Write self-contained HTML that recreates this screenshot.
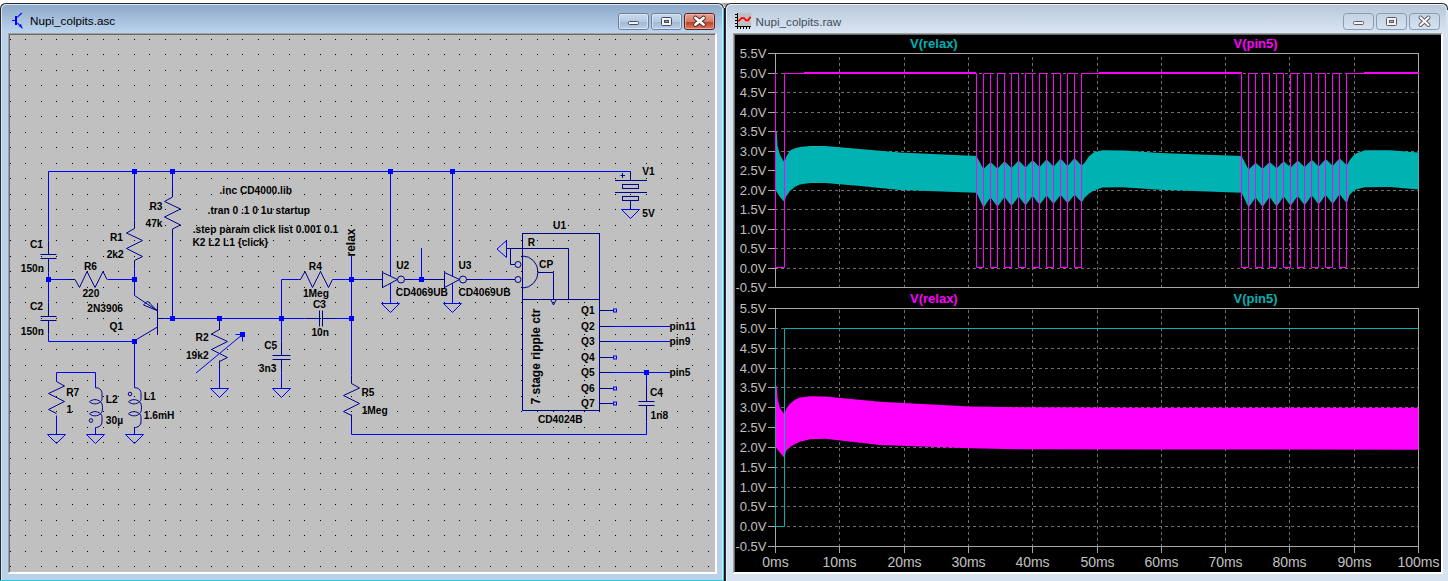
<!DOCTYPE html><html><head><meta charset="utf-8"><style>
html,body{margin:0;padding:0;width:1448px;height:581px;overflow:hidden;background:#fff}
svg{display:block}text{font-family:"Liberation Sans",sans-serif}
</style></head><body>
<svg width="1448" height="581" viewBox="0 0 1448 581">
<rect x="0" y="0" width="1448" height="581" fill="#ffffff"/>
<defs><linearGradient id="tgL" x1="0" y1="0" x2="0" y2="1"><stop offset="0" stop-color="#8fa9c9"/><stop offset="1" stop-color="#bcd4ee"/></linearGradient><linearGradient id="tgR" x1="0" y1="0" x2="0" y2="1"><stop offset="0" stop-color="#b9c9da"/><stop offset="1" stop-color="#d9e5f2"/></linearGradient><linearGradient id="btnL" x1="0" y1="0" x2="0" y2="1"><stop offset="0" stop-color="#c9daee"/><stop offset="0.5" stop-color="#b5cbe3"/><stop offset="0.51" stop-color="#9db6d4"/><stop offset="1" stop-color="#bcd1ea"/></linearGradient><linearGradient id="btnC" x1="0" y1="0" x2="0" y2="1"><stop offset="0" stop-color="#e8a493"/><stop offset="0.5" stop-color="#d47a66"/><stop offset="0.51" stop-color="#b83e22"/><stop offset="1" stop-color="#d9806a"/></linearGradient><linearGradient id="btnR" x1="0" y1="0" x2="0" y2="1"><stop offset="0" stop-color="#c4d3e3"/><stop offset="1" stop-color="#d6e2ef"/></linearGradient></defs>
<path d="M0,581 V9 Q0,3 6,3 H718 Q724,3 724,9 V581 Z" fill="#2a2a2a"/>
<path d="M1,581 V9.5 Q1,4 6.5,4 H717.5 Q723,4 723,9.5 V580 H1 Z" fill="#dbe7f4"/>
<path d="M2,580 V10 Q2,5 7,5 H717 Q722,5 722,10 V580 Z" fill="#b9d1ea"/>
<path d="M2,33 V10 Q2,5 7,5 H717 Q722,5 722,10 V33 Z" fill="url(#tgL)"/>
<rect x="723" y="8" width="1" height="573" fill="#34d0e8"/>
<rect x="0" y="580" width="724" height="1" fill="#2ec8e0"/>
<rect x="724" y="8" width="2" height="573" fill="#141414"/>
<path d="M719,3 Q724,3 725,8 Q726,3 731,3 Z" fill="#a8a8a8"/>
<rect x="8" y="33" width="709" height="541" fill="#ffffff"/>
<rect x="8" y="33" width="708" height="1" fill="#a0a0a0"/>
<rect x="8" y="33" width="1" height="540" fill="#a0a0a0"/>
<rect x="9" y="34" width="706" height="1" fill="#696969"/>
<rect x="9" y="34" width="1" height="538" fill="#696969"/>
<rect x="10" y="35" width="705" height="537" fill="#c0c0c0"/>
<text x="30" y="25.2" font-size="11.7" fill="#000">Nupi_colpits.asc</text>
<g fill="#0000ff"><rect x="12" y="20" width="3" height="1"/><rect x="15" y="16" width="2" height="9"/><path d="M17,17 L21.3,12.6 L22.1,13.4 L17.6,17.8 Z"/><path d="M17,23.2 L17.7,22.5 L22.8,28 L22.1,28.7 Z"/><path d="M18.5,26 L21,23.8 L22,27.5 Z"/></g>
<rect x="618.5" y="13.5" width="30.0" height="16" rx="2.5" fill="url(#btnL)" stroke="#6a7f9c" stroke-width="1"/>
<rect x="651.5" y="13.5" width="30.0" height="16" rx="2.5" fill="url(#btnL)" stroke="#6a7f9c" stroke-width="1"/>
<rect x="684.5" y="13.5" width="30.0" height="16" rx="2.5" fill="url(#btnC)" stroke="#5a2020" stroke-width="1"/>
<rect x="619.5" y="14.5" width="28" height="14" rx="1.5" fill="none" stroke="#e4eef8" stroke-opacity="0.7"/>
<rect x="652.5" y="14.5" width="28" height="14" rx="1.5" fill="none" stroke="#e4eef8" stroke-opacity="0.7"/>
<rect x="685.5" y="14.5" width="28" height="14" rx="1.5" fill="none" stroke="#f6c8b8" stroke-opacity="0.6"/>
<rect x="628.5" y="21.5" width="10" height="3" rx="1" fill="#f4f4f4" stroke="#4a4a5a" stroke-width="1"/>
<rect x="661.5" y="17.5" width="10" height="8" rx="1" fill="#f4f4f4" stroke="#4a4a5a" stroke-width="1"/>
<rect x="664.5" y="20.5" width="4" height="2" fill="#7a9cc8" stroke="#4a4a5a" stroke-width="1"/>
<path d="M695.5 18 L703.5 24.5 M703.5 18 L695.5 24.5" stroke="#4a2a2a" stroke-width="4.6" stroke-linecap="round"/>
<path d="M695.5 18 L703.5 24.5 M703.5 18 L695.5 24.5" stroke="#ffffff" stroke-width="2.8" stroke-linecap="round"/>
<path d="M725,581 V9 Q725,3 731,3 H1442 Q1448,3 1448,9 V581 Z" fill="#2a2a2a"/>
<path d="M726,581 V9.5 Q726,4 731.5,4 H1441.5 Q1447,4 1447,9.5 V581 Z" fill="#eef3f9"/>
<path d="M727,581 V10 Q727,5 732,5 H1441 Q1446,5 1446,10 V581 Z" fill="#d6e3f1"/>
<path d="M727,33 V10 Q727,5 732,5 H1441 Q1446,5 1446,10 V33 Z" fill="url(#tgR)"/>
<rect x="1446" y="10" width="2" height="571" fill="#d6e3f1"/>
<text x="755.5" y="25.5" font-size="11.7" fill="#434e60">Nupi_colpits.raw</text>
<rect x="738" y="13" width="13" height="13" fill="#c0c0c0"/>
<path d="M737,13h1v16h-1z M735,26h16v1h-16z" fill="#000"/>
<path d="M735,14h2v1h-2z M735,17h2v1h-2z M735,20h2v1h-2z M735,23h2v1h-2z M740,27h1v2h-1z M743,27h1v2h-1z M746,27h1v2h-1z M749,27h1v2h-1z" fill="#000"/>
<path d="M738.3,21.3 L741.5,18.2 L744,18.2 L746,20.3 L748,20.3 L750.6,16.8" stroke="#ff0000" stroke-width="1.8" fill="none"/>
<rect x="1343.5" y="13.5" width="30.0" height="16" rx="3" fill="url(#btnR)" stroke="#8a9ab4" stroke-width="1"/>
<rect x="1376.5" y="13.5" width="30.0" height="16" rx="3" fill="url(#btnR)" stroke="#8a9ab4" stroke-width="1"/>
<rect x="1409.5" y="13.5" width="30.0" height="16" rx="3" fill="url(#btnR)" stroke="#8a9ab4" stroke-width="1"/>
<rect x="1353.5" y="21.5" width="10" height="3" rx="1" fill="#f4f4f4" stroke="#5a5a66" stroke-width="1"/>
<rect x="1386.5" y="17.5" width="10" height="8" rx="1" fill="#f4f4f4" stroke="#5a5a66" stroke-width="1"/>
<rect x="1389.5" y="20.5" width="4" height="2" fill="#a8bcd4" stroke="#5a5a66" stroke-width="1"/>
<path d="M1420.5 17.5 L1428.5 25 M1428.5 17.5 L1420.5 25" stroke="#5a5a66" stroke-width="4" stroke-linecap="round"/>
<path d="M1420.5 17.5 L1428.5 25 M1428.5 17.5 L1420.5 25" stroke="#f8f8f8" stroke-width="2.2" stroke-linecap="round"/>
<rect x="733" y="33" width="710" height="541" fill="#ffffff"/>
<rect x="733" y="33" width="709" height="1" fill="#a0a0a0"/>
<rect x="733" y="33" width="1" height="540" fill="#a0a0a0"/>
<rect x="734" y="34" width="707" height="1" fill="#696969"/>
<rect x="734" y="34" width="1" height="538" fill="#696969"/>
<rect x="735" y="35" width="706" height="537" fill="#000000"/>
<path d="M10 39h1v1h-1zM10 54h1v1h-1zM10 70h1v1h-1zM10 85h1v1h-1zM10 101h1v1h-1zM10 116h1v1h-1zM10 132h1v1h-1zM10 147h1v1h-1zM10 163h1v1h-1zM10 178h1v1h-1zM10 194h1v1h-1zM10 209h1v1h-1zM10 225h1v1h-1zM10 240h1v1h-1zM10 256h1v1h-1zM10 271h1v1h-1zM10 287h1v1h-1zM10 302h1v1h-1zM10 318h1v1h-1zM10 334h1v1h-1zM10 349h1v1h-1zM10 365h1v1h-1zM10 380h1v1h-1zM10 396h1v1h-1zM10 411h1v1h-1zM10 427h1v1h-1zM10 442h1v1h-1zM10 458h1v1h-1zM10 473h1v1h-1zM10 489h1v1h-1zM10 504h1v1h-1zM10 520h1v1h-1zM10 535h1v1h-1zM10 551h1v1h-1zM10 566h1v1h-1zM25 39h1v1h-1zM25 54h1v1h-1zM25 70h1v1h-1zM25 85h1v1h-1zM25 101h1v1h-1zM25 116h1v1h-1zM25 132h1v1h-1zM25 147h1v1h-1zM25 163h1v1h-1zM25 178h1v1h-1zM25 194h1v1h-1zM25 209h1v1h-1zM25 225h1v1h-1zM25 240h1v1h-1zM25 256h1v1h-1zM25 271h1v1h-1zM25 287h1v1h-1zM25 302h1v1h-1zM25 318h1v1h-1zM25 334h1v1h-1zM25 349h1v1h-1zM25 365h1v1h-1zM25 380h1v1h-1zM25 396h1v1h-1zM25 411h1v1h-1zM25 427h1v1h-1zM25 442h1v1h-1zM25 458h1v1h-1zM25 473h1v1h-1zM25 489h1v1h-1zM25 504h1v1h-1zM25 520h1v1h-1zM25 535h1v1h-1zM25 551h1v1h-1zM25 566h1v1h-1zM41 39h1v1h-1zM41 54h1v1h-1zM41 70h1v1h-1zM41 85h1v1h-1zM41 101h1v1h-1zM41 116h1v1h-1zM41 132h1v1h-1zM41 147h1v1h-1zM41 163h1v1h-1zM41 178h1v1h-1zM41 194h1v1h-1zM41 209h1v1h-1zM41 225h1v1h-1zM41 240h1v1h-1zM41 256h1v1h-1zM41 271h1v1h-1zM41 287h1v1h-1zM41 302h1v1h-1zM41 318h1v1h-1zM41 334h1v1h-1zM41 349h1v1h-1zM41 365h1v1h-1zM41 380h1v1h-1zM41 396h1v1h-1zM41 411h1v1h-1zM41 427h1v1h-1zM41 442h1v1h-1zM41 458h1v1h-1zM41 473h1v1h-1zM41 489h1v1h-1zM41 504h1v1h-1zM41 520h1v1h-1zM41 535h1v1h-1zM41 551h1v1h-1zM41 566h1v1h-1zM56 39h1v1h-1zM56 54h1v1h-1zM56 70h1v1h-1zM56 85h1v1h-1zM56 101h1v1h-1zM56 116h1v1h-1zM56 132h1v1h-1zM56 147h1v1h-1zM56 163h1v1h-1zM56 178h1v1h-1zM56 194h1v1h-1zM56 209h1v1h-1zM56 225h1v1h-1zM56 240h1v1h-1zM56 256h1v1h-1zM56 271h1v1h-1zM56 287h1v1h-1zM56 302h1v1h-1zM56 318h1v1h-1zM56 334h1v1h-1zM56 349h1v1h-1zM56 365h1v1h-1zM56 380h1v1h-1zM56 396h1v1h-1zM56 411h1v1h-1zM56 427h1v1h-1zM56 442h1v1h-1zM56 458h1v1h-1zM56 473h1v1h-1zM56 489h1v1h-1zM56 504h1v1h-1zM56 520h1v1h-1zM56 535h1v1h-1zM56 551h1v1h-1zM56 566h1v1h-1zM72 39h1v1h-1zM72 54h1v1h-1zM72 70h1v1h-1zM72 85h1v1h-1zM72 101h1v1h-1zM72 116h1v1h-1zM72 132h1v1h-1zM72 147h1v1h-1zM72 163h1v1h-1zM72 178h1v1h-1zM72 194h1v1h-1zM72 209h1v1h-1zM72 225h1v1h-1zM72 240h1v1h-1zM72 256h1v1h-1zM72 271h1v1h-1zM72 287h1v1h-1zM72 302h1v1h-1zM72 318h1v1h-1zM72 334h1v1h-1zM72 349h1v1h-1zM72 365h1v1h-1zM72 380h1v1h-1zM72 396h1v1h-1zM72 411h1v1h-1zM72 427h1v1h-1zM72 442h1v1h-1zM72 458h1v1h-1zM72 473h1v1h-1zM72 489h1v1h-1zM72 504h1v1h-1zM72 520h1v1h-1zM72 535h1v1h-1zM72 551h1v1h-1zM72 566h1v1h-1zM87 39h1v1h-1zM87 54h1v1h-1zM87 70h1v1h-1zM87 85h1v1h-1zM87 101h1v1h-1zM87 116h1v1h-1zM87 132h1v1h-1zM87 147h1v1h-1zM87 163h1v1h-1zM87 178h1v1h-1zM87 194h1v1h-1zM87 209h1v1h-1zM87 225h1v1h-1zM87 240h1v1h-1zM87 256h1v1h-1zM87 271h1v1h-1zM87 287h1v1h-1zM87 302h1v1h-1zM87 318h1v1h-1zM87 334h1v1h-1zM87 349h1v1h-1zM87 365h1v1h-1zM87 380h1v1h-1zM87 396h1v1h-1zM87 411h1v1h-1zM87 427h1v1h-1zM87 442h1v1h-1zM87 458h1v1h-1zM87 473h1v1h-1zM87 489h1v1h-1zM87 504h1v1h-1zM87 520h1v1h-1zM87 535h1v1h-1zM87 551h1v1h-1zM87 566h1v1h-1zM103 39h1v1h-1zM103 54h1v1h-1zM103 70h1v1h-1zM103 85h1v1h-1zM103 101h1v1h-1zM103 116h1v1h-1zM103 132h1v1h-1zM103 147h1v1h-1zM103 163h1v1h-1zM103 178h1v1h-1zM103 194h1v1h-1zM103 209h1v1h-1zM103 225h1v1h-1zM103 240h1v1h-1zM103 256h1v1h-1zM103 271h1v1h-1zM103 287h1v1h-1zM103 302h1v1h-1zM103 318h1v1h-1zM103 334h1v1h-1zM103 349h1v1h-1zM103 365h1v1h-1zM103 380h1v1h-1zM103 396h1v1h-1zM103 411h1v1h-1zM103 427h1v1h-1zM103 442h1v1h-1zM103 458h1v1h-1zM103 473h1v1h-1zM103 489h1v1h-1zM103 504h1v1h-1zM103 520h1v1h-1zM103 535h1v1h-1zM103 551h1v1h-1zM103 566h1v1h-1zM118 39h1v1h-1zM118 54h1v1h-1zM118 70h1v1h-1zM118 85h1v1h-1zM118 101h1v1h-1zM118 116h1v1h-1zM118 132h1v1h-1zM118 147h1v1h-1zM118 163h1v1h-1zM118 178h1v1h-1zM118 194h1v1h-1zM118 209h1v1h-1zM118 225h1v1h-1zM118 240h1v1h-1zM118 256h1v1h-1zM118 271h1v1h-1zM118 287h1v1h-1zM118 302h1v1h-1zM118 318h1v1h-1zM118 334h1v1h-1zM118 349h1v1h-1zM118 365h1v1h-1zM118 380h1v1h-1zM118 396h1v1h-1zM118 411h1v1h-1zM118 427h1v1h-1zM118 442h1v1h-1zM118 458h1v1h-1zM118 473h1v1h-1zM118 489h1v1h-1zM118 504h1v1h-1zM118 520h1v1h-1zM118 535h1v1h-1zM118 551h1v1h-1zM118 566h1v1h-1zM134 39h1v1h-1zM134 54h1v1h-1zM134 70h1v1h-1zM134 85h1v1h-1zM134 101h1v1h-1zM134 116h1v1h-1zM134 132h1v1h-1zM134 147h1v1h-1zM134 163h1v1h-1zM134 178h1v1h-1zM134 194h1v1h-1zM134 209h1v1h-1zM134 225h1v1h-1zM134 240h1v1h-1zM134 256h1v1h-1zM134 271h1v1h-1zM134 287h1v1h-1zM134 302h1v1h-1zM134 318h1v1h-1zM134 334h1v1h-1zM134 349h1v1h-1zM134 365h1v1h-1zM134 380h1v1h-1zM134 396h1v1h-1zM134 411h1v1h-1zM134 427h1v1h-1zM134 442h1v1h-1zM134 458h1v1h-1zM134 473h1v1h-1zM134 489h1v1h-1zM134 504h1v1h-1zM134 520h1v1h-1zM134 535h1v1h-1zM134 551h1v1h-1zM134 566h1v1h-1zM149 39h1v1h-1zM149 54h1v1h-1zM149 70h1v1h-1zM149 85h1v1h-1zM149 101h1v1h-1zM149 116h1v1h-1zM149 132h1v1h-1zM149 147h1v1h-1zM149 163h1v1h-1zM149 178h1v1h-1zM149 194h1v1h-1zM149 209h1v1h-1zM149 225h1v1h-1zM149 240h1v1h-1zM149 256h1v1h-1zM149 271h1v1h-1zM149 287h1v1h-1zM149 302h1v1h-1zM149 318h1v1h-1zM149 334h1v1h-1zM149 349h1v1h-1zM149 365h1v1h-1zM149 380h1v1h-1zM149 396h1v1h-1zM149 411h1v1h-1zM149 427h1v1h-1zM149 442h1v1h-1zM149 458h1v1h-1zM149 473h1v1h-1zM149 489h1v1h-1zM149 504h1v1h-1zM149 520h1v1h-1zM149 535h1v1h-1zM149 551h1v1h-1zM149 566h1v1h-1zM165 39h1v1h-1zM165 54h1v1h-1zM165 70h1v1h-1zM165 85h1v1h-1zM165 101h1v1h-1zM165 116h1v1h-1zM165 132h1v1h-1zM165 147h1v1h-1zM165 163h1v1h-1zM165 178h1v1h-1zM165 194h1v1h-1zM165 209h1v1h-1zM165 225h1v1h-1zM165 240h1v1h-1zM165 256h1v1h-1zM165 271h1v1h-1zM165 287h1v1h-1zM165 302h1v1h-1zM165 318h1v1h-1zM165 334h1v1h-1zM165 349h1v1h-1zM165 365h1v1h-1zM165 380h1v1h-1zM165 396h1v1h-1zM165 411h1v1h-1zM165 427h1v1h-1zM165 442h1v1h-1zM165 458h1v1h-1zM165 473h1v1h-1zM165 489h1v1h-1zM165 504h1v1h-1zM165 520h1v1h-1zM165 535h1v1h-1zM165 551h1v1h-1zM165 566h1v1h-1zM180 39h1v1h-1zM180 54h1v1h-1zM180 70h1v1h-1zM180 85h1v1h-1zM180 101h1v1h-1zM180 116h1v1h-1zM180 132h1v1h-1zM180 147h1v1h-1zM180 163h1v1h-1zM180 178h1v1h-1zM180 194h1v1h-1zM180 209h1v1h-1zM180 225h1v1h-1zM180 240h1v1h-1zM180 256h1v1h-1zM180 271h1v1h-1zM180 287h1v1h-1zM180 302h1v1h-1zM180 318h1v1h-1zM180 334h1v1h-1zM180 349h1v1h-1zM180 365h1v1h-1zM180 380h1v1h-1zM180 396h1v1h-1zM180 411h1v1h-1zM180 427h1v1h-1zM180 442h1v1h-1zM180 458h1v1h-1zM180 473h1v1h-1zM180 489h1v1h-1zM180 504h1v1h-1zM180 520h1v1h-1zM180 535h1v1h-1zM180 551h1v1h-1zM180 566h1v1h-1zM196 39h1v1h-1zM196 54h1v1h-1zM196 70h1v1h-1zM196 85h1v1h-1zM196 101h1v1h-1zM196 116h1v1h-1zM196 132h1v1h-1zM196 147h1v1h-1zM196 163h1v1h-1zM196 178h1v1h-1zM196 194h1v1h-1zM196 209h1v1h-1zM196 225h1v1h-1zM196 240h1v1h-1zM196 256h1v1h-1zM196 271h1v1h-1zM196 287h1v1h-1zM196 302h1v1h-1zM196 318h1v1h-1zM196 334h1v1h-1zM196 349h1v1h-1zM196 365h1v1h-1zM196 380h1v1h-1zM196 396h1v1h-1zM196 411h1v1h-1zM196 427h1v1h-1zM196 442h1v1h-1zM196 458h1v1h-1zM196 473h1v1h-1zM196 489h1v1h-1zM196 504h1v1h-1zM196 520h1v1h-1zM196 535h1v1h-1zM196 551h1v1h-1zM196 566h1v1h-1zM211 39h1v1h-1zM211 54h1v1h-1zM211 70h1v1h-1zM211 85h1v1h-1zM211 101h1v1h-1zM211 116h1v1h-1zM211 132h1v1h-1zM211 147h1v1h-1zM211 163h1v1h-1zM211 178h1v1h-1zM211 194h1v1h-1zM211 209h1v1h-1zM211 225h1v1h-1zM211 240h1v1h-1zM211 256h1v1h-1zM211 271h1v1h-1zM211 287h1v1h-1zM211 302h1v1h-1zM211 318h1v1h-1zM211 334h1v1h-1zM211 349h1v1h-1zM211 365h1v1h-1zM211 380h1v1h-1zM211 396h1v1h-1zM211 411h1v1h-1zM211 427h1v1h-1zM211 442h1v1h-1zM211 458h1v1h-1zM211 473h1v1h-1zM211 489h1v1h-1zM211 504h1v1h-1zM211 520h1v1h-1zM211 535h1v1h-1zM211 551h1v1h-1zM211 566h1v1h-1zM227 39h1v1h-1zM227 54h1v1h-1zM227 70h1v1h-1zM227 85h1v1h-1zM227 101h1v1h-1zM227 116h1v1h-1zM227 132h1v1h-1zM227 147h1v1h-1zM227 163h1v1h-1zM227 178h1v1h-1zM227 194h1v1h-1zM227 209h1v1h-1zM227 225h1v1h-1zM227 240h1v1h-1zM227 256h1v1h-1zM227 271h1v1h-1zM227 287h1v1h-1zM227 302h1v1h-1zM227 318h1v1h-1zM227 334h1v1h-1zM227 349h1v1h-1zM227 365h1v1h-1zM227 380h1v1h-1zM227 396h1v1h-1zM227 411h1v1h-1zM227 427h1v1h-1zM227 442h1v1h-1zM227 458h1v1h-1zM227 473h1v1h-1zM227 489h1v1h-1zM227 504h1v1h-1zM227 520h1v1h-1zM227 535h1v1h-1zM227 551h1v1h-1zM227 566h1v1h-1zM242 39h1v1h-1zM242 54h1v1h-1zM242 70h1v1h-1zM242 85h1v1h-1zM242 101h1v1h-1zM242 116h1v1h-1zM242 132h1v1h-1zM242 147h1v1h-1zM242 163h1v1h-1zM242 178h1v1h-1zM242 194h1v1h-1zM242 209h1v1h-1zM242 225h1v1h-1zM242 240h1v1h-1zM242 256h1v1h-1zM242 271h1v1h-1zM242 287h1v1h-1zM242 302h1v1h-1zM242 318h1v1h-1zM242 334h1v1h-1zM242 349h1v1h-1zM242 365h1v1h-1zM242 380h1v1h-1zM242 396h1v1h-1zM242 411h1v1h-1zM242 427h1v1h-1zM242 442h1v1h-1zM242 458h1v1h-1zM242 473h1v1h-1zM242 489h1v1h-1zM242 504h1v1h-1zM242 520h1v1h-1zM242 535h1v1h-1zM242 551h1v1h-1zM242 566h1v1h-1zM258 39h1v1h-1zM258 54h1v1h-1zM258 70h1v1h-1zM258 85h1v1h-1zM258 101h1v1h-1zM258 116h1v1h-1zM258 132h1v1h-1zM258 147h1v1h-1zM258 163h1v1h-1zM258 178h1v1h-1zM258 194h1v1h-1zM258 209h1v1h-1zM258 225h1v1h-1zM258 240h1v1h-1zM258 256h1v1h-1zM258 271h1v1h-1zM258 287h1v1h-1zM258 302h1v1h-1zM258 318h1v1h-1zM258 334h1v1h-1zM258 349h1v1h-1zM258 365h1v1h-1zM258 380h1v1h-1zM258 396h1v1h-1zM258 411h1v1h-1zM258 427h1v1h-1zM258 442h1v1h-1zM258 458h1v1h-1zM258 473h1v1h-1zM258 489h1v1h-1zM258 504h1v1h-1zM258 520h1v1h-1zM258 535h1v1h-1zM258 551h1v1h-1zM258 566h1v1h-1zM273 39h1v1h-1zM273 54h1v1h-1zM273 70h1v1h-1zM273 85h1v1h-1zM273 101h1v1h-1zM273 116h1v1h-1zM273 132h1v1h-1zM273 147h1v1h-1zM273 163h1v1h-1zM273 178h1v1h-1zM273 194h1v1h-1zM273 209h1v1h-1zM273 225h1v1h-1zM273 240h1v1h-1zM273 256h1v1h-1zM273 271h1v1h-1zM273 287h1v1h-1zM273 302h1v1h-1zM273 318h1v1h-1zM273 334h1v1h-1zM273 349h1v1h-1zM273 365h1v1h-1zM273 380h1v1h-1zM273 396h1v1h-1zM273 411h1v1h-1zM273 427h1v1h-1zM273 442h1v1h-1zM273 458h1v1h-1zM273 473h1v1h-1zM273 489h1v1h-1zM273 504h1v1h-1zM273 520h1v1h-1zM273 535h1v1h-1zM273 551h1v1h-1zM273 566h1v1h-1zM289 39h1v1h-1zM289 54h1v1h-1zM289 70h1v1h-1zM289 85h1v1h-1zM289 101h1v1h-1zM289 116h1v1h-1zM289 132h1v1h-1zM289 147h1v1h-1zM289 163h1v1h-1zM289 178h1v1h-1zM289 194h1v1h-1zM289 209h1v1h-1zM289 225h1v1h-1zM289 240h1v1h-1zM289 256h1v1h-1zM289 271h1v1h-1zM289 287h1v1h-1zM289 302h1v1h-1zM289 318h1v1h-1zM289 334h1v1h-1zM289 349h1v1h-1zM289 365h1v1h-1zM289 380h1v1h-1zM289 396h1v1h-1zM289 411h1v1h-1zM289 427h1v1h-1zM289 442h1v1h-1zM289 458h1v1h-1zM289 473h1v1h-1zM289 489h1v1h-1zM289 504h1v1h-1zM289 520h1v1h-1zM289 535h1v1h-1zM289 551h1v1h-1zM289 566h1v1h-1zM304 39h1v1h-1zM304 54h1v1h-1zM304 70h1v1h-1zM304 85h1v1h-1zM304 101h1v1h-1zM304 116h1v1h-1zM304 132h1v1h-1zM304 147h1v1h-1zM304 163h1v1h-1zM304 178h1v1h-1zM304 194h1v1h-1zM304 209h1v1h-1zM304 225h1v1h-1zM304 240h1v1h-1zM304 256h1v1h-1zM304 271h1v1h-1zM304 287h1v1h-1zM304 302h1v1h-1zM304 318h1v1h-1zM304 334h1v1h-1zM304 349h1v1h-1zM304 365h1v1h-1zM304 380h1v1h-1zM304 396h1v1h-1zM304 411h1v1h-1zM304 427h1v1h-1zM304 442h1v1h-1zM304 458h1v1h-1zM304 473h1v1h-1zM304 489h1v1h-1zM304 504h1v1h-1zM304 520h1v1h-1zM304 535h1v1h-1zM304 551h1v1h-1zM304 566h1v1h-1zM320 39h1v1h-1zM320 54h1v1h-1zM320 70h1v1h-1zM320 85h1v1h-1zM320 101h1v1h-1zM320 116h1v1h-1zM320 132h1v1h-1zM320 147h1v1h-1zM320 163h1v1h-1zM320 178h1v1h-1zM320 194h1v1h-1zM320 209h1v1h-1zM320 225h1v1h-1zM320 240h1v1h-1zM320 256h1v1h-1zM320 271h1v1h-1zM320 287h1v1h-1zM320 302h1v1h-1zM320 318h1v1h-1zM320 334h1v1h-1zM320 349h1v1h-1zM320 365h1v1h-1zM320 380h1v1h-1zM320 396h1v1h-1zM320 411h1v1h-1zM320 427h1v1h-1zM320 442h1v1h-1zM320 458h1v1h-1zM320 473h1v1h-1zM320 489h1v1h-1zM320 504h1v1h-1zM320 520h1v1h-1zM320 535h1v1h-1zM320 551h1v1h-1zM320 566h1v1h-1zM335 39h1v1h-1zM335 54h1v1h-1zM335 70h1v1h-1zM335 85h1v1h-1zM335 101h1v1h-1zM335 116h1v1h-1zM335 132h1v1h-1zM335 147h1v1h-1zM335 163h1v1h-1zM335 178h1v1h-1zM335 194h1v1h-1zM335 209h1v1h-1zM335 225h1v1h-1zM335 240h1v1h-1zM335 256h1v1h-1zM335 271h1v1h-1zM335 287h1v1h-1zM335 302h1v1h-1zM335 318h1v1h-1zM335 334h1v1h-1zM335 349h1v1h-1zM335 365h1v1h-1zM335 380h1v1h-1zM335 396h1v1h-1zM335 411h1v1h-1zM335 427h1v1h-1zM335 442h1v1h-1zM335 458h1v1h-1zM335 473h1v1h-1zM335 489h1v1h-1zM335 504h1v1h-1zM335 520h1v1h-1zM335 535h1v1h-1zM335 551h1v1h-1zM335 566h1v1h-1zM351 39h1v1h-1zM351 54h1v1h-1zM351 70h1v1h-1zM351 85h1v1h-1zM351 101h1v1h-1zM351 116h1v1h-1zM351 132h1v1h-1zM351 147h1v1h-1zM351 163h1v1h-1zM351 178h1v1h-1zM351 194h1v1h-1zM351 209h1v1h-1zM351 225h1v1h-1zM351 240h1v1h-1zM351 256h1v1h-1zM351 271h1v1h-1zM351 287h1v1h-1zM351 302h1v1h-1zM351 318h1v1h-1zM351 334h1v1h-1zM351 349h1v1h-1zM351 365h1v1h-1zM351 380h1v1h-1zM351 396h1v1h-1zM351 411h1v1h-1zM351 427h1v1h-1zM351 442h1v1h-1zM351 458h1v1h-1zM351 473h1v1h-1zM351 489h1v1h-1zM351 504h1v1h-1zM351 520h1v1h-1zM351 535h1v1h-1zM351 551h1v1h-1zM351 566h1v1h-1zM366 39h1v1h-1zM366 54h1v1h-1zM366 70h1v1h-1zM366 85h1v1h-1zM366 101h1v1h-1zM366 116h1v1h-1zM366 132h1v1h-1zM366 147h1v1h-1zM366 163h1v1h-1zM366 178h1v1h-1zM366 194h1v1h-1zM366 209h1v1h-1zM366 225h1v1h-1zM366 240h1v1h-1zM366 256h1v1h-1zM366 271h1v1h-1zM366 287h1v1h-1zM366 302h1v1h-1zM366 318h1v1h-1zM366 334h1v1h-1zM366 349h1v1h-1zM366 365h1v1h-1zM366 380h1v1h-1zM366 396h1v1h-1zM366 411h1v1h-1zM366 427h1v1h-1zM366 442h1v1h-1zM366 458h1v1h-1zM366 473h1v1h-1zM366 489h1v1h-1zM366 504h1v1h-1zM366 520h1v1h-1zM366 535h1v1h-1zM366 551h1v1h-1zM366 566h1v1h-1zM382 39h1v1h-1zM382 54h1v1h-1zM382 70h1v1h-1zM382 85h1v1h-1zM382 101h1v1h-1zM382 116h1v1h-1zM382 132h1v1h-1zM382 147h1v1h-1zM382 163h1v1h-1zM382 178h1v1h-1zM382 194h1v1h-1zM382 209h1v1h-1zM382 225h1v1h-1zM382 240h1v1h-1zM382 256h1v1h-1zM382 271h1v1h-1zM382 287h1v1h-1zM382 302h1v1h-1zM382 318h1v1h-1zM382 334h1v1h-1zM382 349h1v1h-1zM382 365h1v1h-1zM382 380h1v1h-1zM382 396h1v1h-1zM382 411h1v1h-1zM382 427h1v1h-1zM382 442h1v1h-1zM382 458h1v1h-1zM382 473h1v1h-1zM382 489h1v1h-1zM382 504h1v1h-1zM382 520h1v1h-1zM382 535h1v1h-1zM382 551h1v1h-1zM382 566h1v1h-1zM397 39h1v1h-1zM397 54h1v1h-1zM397 70h1v1h-1zM397 85h1v1h-1zM397 101h1v1h-1zM397 116h1v1h-1zM397 132h1v1h-1zM397 147h1v1h-1zM397 163h1v1h-1zM397 178h1v1h-1zM397 194h1v1h-1zM397 209h1v1h-1zM397 225h1v1h-1zM397 240h1v1h-1zM397 256h1v1h-1zM397 271h1v1h-1zM397 287h1v1h-1zM397 302h1v1h-1zM397 318h1v1h-1zM397 334h1v1h-1zM397 349h1v1h-1zM397 365h1v1h-1zM397 380h1v1h-1zM397 396h1v1h-1zM397 411h1v1h-1zM397 427h1v1h-1zM397 442h1v1h-1zM397 458h1v1h-1zM397 473h1v1h-1zM397 489h1v1h-1zM397 504h1v1h-1zM397 520h1v1h-1zM397 535h1v1h-1zM397 551h1v1h-1zM397 566h1v1h-1zM413 39h1v1h-1zM413 54h1v1h-1zM413 70h1v1h-1zM413 85h1v1h-1zM413 101h1v1h-1zM413 116h1v1h-1zM413 132h1v1h-1zM413 147h1v1h-1zM413 163h1v1h-1zM413 178h1v1h-1zM413 194h1v1h-1zM413 209h1v1h-1zM413 225h1v1h-1zM413 240h1v1h-1zM413 256h1v1h-1zM413 271h1v1h-1zM413 287h1v1h-1zM413 302h1v1h-1zM413 318h1v1h-1zM413 334h1v1h-1zM413 349h1v1h-1zM413 365h1v1h-1zM413 380h1v1h-1zM413 396h1v1h-1zM413 411h1v1h-1zM413 427h1v1h-1zM413 442h1v1h-1zM413 458h1v1h-1zM413 473h1v1h-1zM413 489h1v1h-1zM413 504h1v1h-1zM413 520h1v1h-1zM413 535h1v1h-1zM413 551h1v1h-1zM413 566h1v1h-1zM428 39h1v1h-1zM428 54h1v1h-1zM428 70h1v1h-1zM428 85h1v1h-1zM428 101h1v1h-1zM428 116h1v1h-1zM428 132h1v1h-1zM428 147h1v1h-1zM428 163h1v1h-1zM428 178h1v1h-1zM428 194h1v1h-1zM428 209h1v1h-1zM428 225h1v1h-1zM428 240h1v1h-1zM428 256h1v1h-1zM428 271h1v1h-1zM428 287h1v1h-1zM428 302h1v1h-1zM428 318h1v1h-1zM428 334h1v1h-1zM428 349h1v1h-1zM428 365h1v1h-1zM428 380h1v1h-1zM428 396h1v1h-1zM428 411h1v1h-1zM428 427h1v1h-1zM428 442h1v1h-1zM428 458h1v1h-1zM428 473h1v1h-1zM428 489h1v1h-1zM428 504h1v1h-1zM428 520h1v1h-1zM428 535h1v1h-1zM428 551h1v1h-1zM428 566h1v1h-1zM444 39h1v1h-1zM444 54h1v1h-1zM444 70h1v1h-1zM444 85h1v1h-1zM444 101h1v1h-1zM444 116h1v1h-1zM444 132h1v1h-1zM444 147h1v1h-1zM444 163h1v1h-1zM444 178h1v1h-1zM444 194h1v1h-1zM444 209h1v1h-1zM444 225h1v1h-1zM444 240h1v1h-1zM444 256h1v1h-1zM444 271h1v1h-1zM444 287h1v1h-1zM444 302h1v1h-1zM444 318h1v1h-1zM444 334h1v1h-1zM444 349h1v1h-1zM444 365h1v1h-1zM444 380h1v1h-1zM444 396h1v1h-1zM444 411h1v1h-1zM444 427h1v1h-1zM444 442h1v1h-1zM444 458h1v1h-1zM444 473h1v1h-1zM444 489h1v1h-1zM444 504h1v1h-1zM444 520h1v1h-1zM444 535h1v1h-1zM444 551h1v1h-1zM444 566h1v1h-1zM459 39h1v1h-1zM459 54h1v1h-1zM459 70h1v1h-1zM459 85h1v1h-1zM459 101h1v1h-1zM459 116h1v1h-1zM459 132h1v1h-1zM459 147h1v1h-1zM459 163h1v1h-1zM459 178h1v1h-1zM459 194h1v1h-1zM459 209h1v1h-1zM459 225h1v1h-1zM459 240h1v1h-1zM459 256h1v1h-1zM459 271h1v1h-1zM459 287h1v1h-1zM459 302h1v1h-1zM459 318h1v1h-1zM459 334h1v1h-1zM459 349h1v1h-1zM459 365h1v1h-1zM459 380h1v1h-1zM459 396h1v1h-1zM459 411h1v1h-1zM459 427h1v1h-1zM459 442h1v1h-1zM459 458h1v1h-1zM459 473h1v1h-1zM459 489h1v1h-1zM459 504h1v1h-1zM459 520h1v1h-1zM459 535h1v1h-1zM459 551h1v1h-1zM459 566h1v1h-1zM475 39h1v1h-1zM475 54h1v1h-1zM475 70h1v1h-1zM475 85h1v1h-1zM475 101h1v1h-1zM475 116h1v1h-1zM475 132h1v1h-1zM475 147h1v1h-1zM475 163h1v1h-1zM475 178h1v1h-1zM475 194h1v1h-1zM475 209h1v1h-1zM475 225h1v1h-1zM475 240h1v1h-1zM475 256h1v1h-1zM475 271h1v1h-1zM475 287h1v1h-1zM475 302h1v1h-1zM475 318h1v1h-1zM475 334h1v1h-1zM475 349h1v1h-1zM475 365h1v1h-1zM475 380h1v1h-1zM475 396h1v1h-1zM475 411h1v1h-1zM475 427h1v1h-1zM475 442h1v1h-1zM475 458h1v1h-1zM475 473h1v1h-1zM475 489h1v1h-1zM475 504h1v1h-1zM475 520h1v1h-1zM475 535h1v1h-1zM475 551h1v1h-1zM475 566h1v1h-1zM490 39h1v1h-1zM490 54h1v1h-1zM490 70h1v1h-1zM490 85h1v1h-1zM490 101h1v1h-1zM490 116h1v1h-1zM490 132h1v1h-1zM490 147h1v1h-1zM490 163h1v1h-1zM490 178h1v1h-1zM490 194h1v1h-1zM490 209h1v1h-1zM490 225h1v1h-1zM490 240h1v1h-1zM490 256h1v1h-1zM490 271h1v1h-1zM490 287h1v1h-1zM490 302h1v1h-1zM490 318h1v1h-1zM490 334h1v1h-1zM490 349h1v1h-1zM490 365h1v1h-1zM490 380h1v1h-1zM490 396h1v1h-1zM490 411h1v1h-1zM490 427h1v1h-1zM490 442h1v1h-1zM490 458h1v1h-1zM490 473h1v1h-1zM490 489h1v1h-1zM490 504h1v1h-1zM490 520h1v1h-1zM490 535h1v1h-1zM490 551h1v1h-1zM490 566h1v1h-1zM506 39h1v1h-1zM506 54h1v1h-1zM506 70h1v1h-1zM506 85h1v1h-1zM506 101h1v1h-1zM506 116h1v1h-1zM506 132h1v1h-1zM506 147h1v1h-1zM506 163h1v1h-1zM506 178h1v1h-1zM506 194h1v1h-1zM506 209h1v1h-1zM506 225h1v1h-1zM506 240h1v1h-1zM506 256h1v1h-1zM506 271h1v1h-1zM506 287h1v1h-1zM506 302h1v1h-1zM506 318h1v1h-1zM506 334h1v1h-1zM506 349h1v1h-1zM506 365h1v1h-1zM506 380h1v1h-1zM506 396h1v1h-1zM506 411h1v1h-1zM506 427h1v1h-1zM506 442h1v1h-1zM506 458h1v1h-1zM506 473h1v1h-1zM506 489h1v1h-1zM506 504h1v1h-1zM506 520h1v1h-1zM506 535h1v1h-1zM506 551h1v1h-1zM506 566h1v1h-1zM521 39h1v1h-1zM521 54h1v1h-1zM521 70h1v1h-1zM521 85h1v1h-1zM521 101h1v1h-1zM521 116h1v1h-1zM521 132h1v1h-1zM521 147h1v1h-1zM521 163h1v1h-1zM521 178h1v1h-1zM521 194h1v1h-1zM521 209h1v1h-1zM521 225h1v1h-1zM521 240h1v1h-1zM521 256h1v1h-1zM521 271h1v1h-1zM521 287h1v1h-1zM521 302h1v1h-1zM521 318h1v1h-1zM521 334h1v1h-1zM521 349h1v1h-1zM521 365h1v1h-1zM521 380h1v1h-1zM521 396h1v1h-1zM521 411h1v1h-1zM521 427h1v1h-1zM521 442h1v1h-1zM521 458h1v1h-1zM521 473h1v1h-1zM521 489h1v1h-1zM521 504h1v1h-1zM521 520h1v1h-1zM521 535h1v1h-1zM521 551h1v1h-1zM521 566h1v1h-1zM537 39h1v1h-1zM537 54h1v1h-1zM537 70h1v1h-1zM537 85h1v1h-1zM537 101h1v1h-1zM537 116h1v1h-1zM537 132h1v1h-1zM537 147h1v1h-1zM537 163h1v1h-1zM537 178h1v1h-1zM537 194h1v1h-1zM537 209h1v1h-1zM537 225h1v1h-1zM537 240h1v1h-1zM537 256h1v1h-1zM537 271h1v1h-1zM537 287h1v1h-1zM537 302h1v1h-1zM537 318h1v1h-1zM537 334h1v1h-1zM537 349h1v1h-1zM537 365h1v1h-1zM537 380h1v1h-1zM537 396h1v1h-1zM537 411h1v1h-1zM537 427h1v1h-1zM537 442h1v1h-1zM537 458h1v1h-1zM537 473h1v1h-1zM537 489h1v1h-1zM537 504h1v1h-1zM537 520h1v1h-1zM537 535h1v1h-1zM537 551h1v1h-1zM537 566h1v1h-1zM553 39h1v1h-1zM553 54h1v1h-1zM553 70h1v1h-1zM553 85h1v1h-1zM553 101h1v1h-1zM553 116h1v1h-1zM553 132h1v1h-1zM553 147h1v1h-1zM553 163h1v1h-1zM553 178h1v1h-1zM553 194h1v1h-1zM553 209h1v1h-1zM553 225h1v1h-1zM553 240h1v1h-1zM553 256h1v1h-1zM553 271h1v1h-1zM553 287h1v1h-1zM553 302h1v1h-1zM553 318h1v1h-1zM553 334h1v1h-1zM553 349h1v1h-1zM553 365h1v1h-1zM553 380h1v1h-1zM553 396h1v1h-1zM553 411h1v1h-1zM553 427h1v1h-1zM553 442h1v1h-1zM553 458h1v1h-1zM553 473h1v1h-1zM553 489h1v1h-1zM553 504h1v1h-1zM553 520h1v1h-1zM553 535h1v1h-1zM553 551h1v1h-1zM553 566h1v1h-1zM568 39h1v1h-1zM568 54h1v1h-1zM568 70h1v1h-1zM568 85h1v1h-1zM568 101h1v1h-1zM568 116h1v1h-1zM568 132h1v1h-1zM568 147h1v1h-1zM568 163h1v1h-1zM568 178h1v1h-1zM568 194h1v1h-1zM568 209h1v1h-1zM568 225h1v1h-1zM568 240h1v1h-1zM568 256h1v1h-1zM568 271h1v1h-1zM568 287h1v1h-1zM568 302h1v1h-1zM568 318h1v1h-1zM568 334h1v1h-1zM568 349h1v1h-1zM568 365h1v1h-1zM568 380h1v1h-1zM568 396h1v1h-1zM568 411h1v1h-1zM568 427h1v1h-1zM568 442h1v1h-1zM568 458h1v1h-1zM568 473h1v1h-1zM568 489h1v1h-1zM568 504h1v1h-1zM568 520h1v1h-1zM568 535h1v1h-1zM568 551h1v1h-1zM568 566h1v1h-1zM584 39h1v1h-1zM584 54h1v1h-1zM584 70h1v1h-1zM584 85h1v1h-1zM584 101h1v1h-1zM584 116h1v1h-1zM584 132h1v1h-1zM584 147h1v1h-1zM584 163h1v1h-1zM584 178h1v1h-1zM584 194h1v1h-1zM584 209h1v1h-1zM584 225h1v1h-1zM584 240h1v1h-1zM584 256h1v1h-1zM584 271h1v1h-1zM584 287h1v1h-1zM584 302h1v1h-1zM584 318h1v1h-1zM584 334h1v1h-1zM584 349h1v1h-1zM584 365h1v1h-1zM584 380h1v1h-1zM584 396h1v1h-1zM584 411h1v1h-1zM584 427h1v1h-1zM584 442h1v1h-1zM584 458h1v1h-1zM584 473h1v1h-1zM584 489h1v1h-1zM584 504h1v1h-1zM584 520h1v1h-1zM584 535h1v1h-1zM584 551h1v1h-1zM584 566h1v1h-1zM599 39h1v1h-1zM599 54h1v1h-1zM599 70h1v1h-1zM599 85h1v1h-1zM599 101h1v1h-1zM599 116h1v1h-1zM599 132h1v1h-1zM599 147h1v1h-1zM599 163h1v1h-1zM599 178h1v1h-1zM599 194h1v1h-1zM599 209h1v1h-1zM599 225h1v1h-1zM599 240h1v1h-1zM599 256h1v1h-1zM599 271h1v1h-1zM599 287h1v1h-1zM599 302h1v1h-1zM599 318h1v1h-1zM599 334h1v1h-1zM599 349h1v1h-1zM599 365h1v1h-1zM599 380h1v1h-1zM599 396h1v1h-1zM599 411h1v1h-1zM599 427h1v1h-1zM599 442h1v1h-1zM599 458h1v1h-1zM599 473h1v1h-1zM599 489h1v1h-1zM599 504h1v1h-1zM599 520h1v1h-1zM599 535h1v1h-1zM599 551h1v1h-1zM599 566h1v1h-1zM615 39h1v1h-1zM615 54h1v1h-1zM615 70h1v1h-1zM615 85h1v1h-1zM615 101h1v1h-1zM615 116h1v1h-1zM615 132h1v1h-1zM615 147h1v1h-1zM615 163h1v1h-1zM615 178h1v1h-1zM615 194h1v1h-1zM615 209h1v1h-1zM615 225h1v1h-1zM615 240h1v1h-1zM615 256h1v1h-1zM615 271h1v1h-1zM615 287h1v1h-1zM615 302h1v1h-1zM615 318h1v1h-1zM615 334h1v1h-1zM615 349h1v1h-1zM615 365h1v1h-1zM615 380h1v1h-1zM615 396h1v1h-1zM615 411h1v1h-1zM615 427h1v1h-1zM615 442h1v1h-1zM615 458h1v1h-1zM615 473h1v1h-1zM615 489h1v1h-1zM615 504h1v1h-1zM615 520h1v1h-1zM615 535h1v1h-1zM615 551h1v1h-1zM615 566h1v1h-1zM630 39h1v1h-1zM630 54h1v1h-1zM630 70h1v1h-1zM630 85h1v1h-1zM630 101h1v1h-1zM630 116h1v1h-1zM630 132h1v1h-1zM630 147h1v1h-1zM630 163h1v1h-1zM630 178h1v1h-1zM630 194h1v1h-1zM630 209h1v1h-1zM630 225h1v1h-1zM630 240h1v1h-1zM630 256h1v1h-1zM630 271h1v1h-1zM630 287h1v1h-1zM630 302h1v1h-1zM630 318h1v1h-1zM630 334h1v1h-1zM630 349h1v1h-1zM630 365h1v1h-1zM630 380h1v1h-1zM630 396h1v1h-1zM630 411h1v1h-1zM630 427h1v1h-1zM630 442h1v1h-1zM630 458h1v1h-1zM630 473h1v1h-1zM630 489h1v1h-1zM630 504h1v1h-1zM630 520h1v1h-1zM630 535h1v1h-1zM630 551h1v1h-1zM630 566h1v1h-1zM646 39h1v1h-1zM646 54h1v1h-1zM646 70h1v1h-1zM646 85h1v1h-1zM646 101h1v1h-1zM646 116h1v1h-1zM646 132h1v1h-1zM646 147h1v1h-1zM646 163h1v1h-1zM646 178h1v1h-1zM646 194h1v1h-1zM646 209h1v1h-1zM646 225h1v1h-1zM646 240h1v1h-1zM646 256h1v1h-1zM646 271h1v1h-1zM646 287h1v1h-1zM646 302h1v1h-1zM646 318h1v1h-1zM646 334h1v1h-1zM646 349h1v1h-1zM646 365h1v1h-1zM646 380h1v1h-1zM646 396h1v1h-1zM646 411h1v1h-1zM646 427h1v1h-1zM646 442h1v1h-1zM646 458h1v1h-1zM646 473h1v1h-1zM646 489h1v1h-1zM646 504h1v1h-1zM646 520h1v1h-1zM646 535h1v1h-1zM646 551h1v1h-1zM646 566h1v1h-1zM661 39h1v1h-1zM661 54h1v1h-1zM661 70h1v1h-1zM661 85h1v1h-1zM661 101h1v1h-1zM661 116h1v1h-1zM661 132h1v1h-1zM661 147h1v1h-1zM661 163h1v1h-1zM661 178h1v1h-1zM661 194h1v1h-1zM661 209h1v1h-1zM661 225h1v1h-1zM661 240h1v1h-1zM661 256h1v1h-1zM661 271h1v1h-1zM661 287h1v1h-1zM661 302h1v1h-1zM661 318h1v1h-1zM661 334h1v1h-1zM661 349h1v1h-1zM661 365h1v1h-1zM661 380h1v1h-1zM661 396h1v1h-1zM661 411h1v1h-1zM661 427h1v1h-1zM661 442h1v1h-1zM661 458h1v1h-1zM661 473h1v1h-1zM661 489h1v1h-1zM661 504h1v1h-1zM661 520h1v1h-1zM661 535h1v1h-1zM661 551h1v1h-1zM661 566h1v1h-1zM677 39h1v1h-1zM677 54h1v1h-1zM677 70h1v1h-1zM677 85h1v1h-1zM677 101h1v1h-1zM677 116h1v1h-1zM677 132h1v1h-1zM677 147h1v1h-1zM677 163h1v1h-1zM677 178h1v1h-1zM677 194h1v1h-1zM677 209h1v1h-1zM677 225h1v1h-1zM677 240h1v1h-1zM677 256h1v1h-1zM677 271h1v1h-1zM677 287h1v1h-1zM677 302h1v1h-1zM677 318h1v1h-1zM677 334h1v1h-1zM677 349h1v1h-1zM677 365h1v1h-1zM677 380h1v1h-1zM677 396h1v1h-1zM677 411h1v1h-1zM677 427h1v1h-1zM677 442h1v1h-1zM677 458h1v1h-1zM677 473h1v1h-1zM677 489h1v1h-1zM677 504h1v1h-1zM677 520h1v1h-1zM677 535h1v1h-1zM677 551h1v1h-1zM677 566h1v1h-1zM692 39h1v1h-1zM692 54h1v1h-1zM692 70h1v1h-1zM692 85h1v1h-1zM692 101h1v1h-1zM692 116h1v1h-1zM692 132h1v1h-1zM692 147h1v1h-1zM692 163h1v1h-1zM692 178h1v1h-1zM692 194h1v1h-1zM692 209h1v1h-1zM692 225h1v1h-1zM692 240h1v1h-1zM692 256h1v1h-1zM692 271h1v1h-1zM692 287h1v1h-1zM692 302h1v1h-1zM692 318h1v1h-1zM692 334h1v1h-1zM692 349h1v1h-1zM692 365h1v1h-1zM692 380h1v1h-1zM692 396h1v1h-1zM692 411h1v1h-1zM692 427h1v1h-1zM692 442h1v1h-1zM692 458h1v1h-1zM692 473h1v1h-1zM692 489h1v1h-1zM692 504h1v1h-1zM692 520h1v1h-1zM692 535h1v1h-1zM692 551h1v1h-1zM692 566h1v1h-1zM708 39h1v1h-1zM708 54h1v1h-1zM708 70h1v1h-1zM708 85h1v1h-1zM708 101h1v1h-1zM708 116h1v1h-1zM708 132h1v1h-1zM708 147h1v1h-1zM708 163h1v1h-1zM708 178h1v1h-1zM708 194h1v1h-1zM708 209h1v1h-1zM708 225h1v1h-1zM708 240h1v1h-1zM708 256h1v1h-1zM708 271h1v1h-1zM708 287h1v1h-1zM708 302h1v1h-1zM708 318h1v1h-1zM708 334h1v1h-1zM708 349h1v1h-1zM708 365h1v1h-1zM708 380h1v1h-1zM708 396h1v1h-1zM708 411h1v1h-1zM708 427h1v1h-1zM708 442h1v1h-1zM708 458h1v1h-1zM708 473h1v1h-1zM708 489h1v1h-1zM708 504h1v1h-1zM708 520h1v1h-1zM708 535h1v1h-1zM708 551h1v1h-1zM708 566h1v1h-1z" fill="#000"/>
<path d="M48.5,240.5 L48.5,171.5 L630.5,171.5" fill="none" stroke="#0000ff" stroke-width="1"/>
<path d="M48.5,272.5 L48.5,302.5" fill="none" stroke="#0000ff" stroke-width="1"/>
<path d="M48.5,334.5 L48.5,341.5 L134.5,341.5 L134.5,387.75" fill="none" stroke="#0000ff" stroke-width="1"/>
<path d="M48.5,279.5 L67,279.5" fill="none" stroke="#0000ff" stroke-width="1"/>
<path d="M108,279.5 L134.5,279.5" fill="none" stroke="#0000ff" stroke-width="1"/>
<path d="M134.5,171.5 L134.5,220.5" fill="none" stroke="#0000ff" stroke-width="1"/>
<path d="M134.5,268.5 L134.5,295.5" fill="none" stroke="#0000ff" stroke-width="1"/>
<path d="M172.5,171.5 L172.5,189" fill="none" stroke="#0000ff" stroke-width="1"/>
<path d="M172.5,237 L172.5,318.5" fill="none" stroke="#0000ff" stroke-width="1"/>
<path d="M164.5,318.5 L305.5,318.5" fill="none" stroke="#0000ff" stroke-width="1"/>
<path d="M335,318.5 L351.5,318.5" fill="none" stroke="#0000ff" stroke-width="1"/>
<path d="M219.5,318.5 L219.5,322" fill="none" stroke="#0000ff" stroke-width="1"/>
<path d="M219.5,368 L219.5,388.5" fill="none" stroke="#0000ff" stroke-width="1"/>
<path d="M281.5,318.5 L281.5,341.5" fill="none" stroke="#0000ff" stroke-width="1"/>
<path d="M281.5,372.5 L281.5,388.5" fill="none" stroke="#0000ff" stroke-width="1"/>
<path d="M281.5,318.5 L281.5,279.5 L298.5,279.5" fill="none" stroke="#0000ff" stroke-width="1"/>
<path d="M333,279.5 L351.5,279.5" fill="none" stroke="#0000ff" stroke-width="1"/>
<path d="M351.5,256 L351.5,375.5" fill="none" stroke="#0000ff" stroke-width="1"/>
<path d="M351.5,422 L351.5,434.5 L646.5,434.5 L646.5,421.5" fill="none" stroke="#0000ff" stroke-width="1"/>
<path d="M646.5,386 L646.5,372.5" fill="none" stroke="#0000ff" stroke-width="1"/>
<path d="M351.5,279.5 L367,279.5" fill="none" stroke="#0000ff" stroke-width="1"/>
<path d="M413,279.5 L428,279.5" fill="none" stroke="#0000ff" stroke-width="1"/>
<path d="M421.5,279.5 L421.5,248" fill="none" stroke="#0000ff" stroke-width="1"/>
<path d="M390.5,171.5 L390.5,276" fill="none" stroke="#0000ff" stroke-width="1"/>
<path d="M390.5,283 L390.5,303.5" fill="none" stroke="#0000ff" stroke-width="1"/>
<path d="M452.5,171.5 L452.5,276" fill="none" stroke="#0000ff" stroke-width="1"/>
<path d="M452.5,283 L452.5,303.5" fill="none" stroke="#0000ff" stroke-width="1"/>
<path d="M483.5,279.5 L507,279.5" fill="none" stroke="#0000ff" stroke-width="1"/>
<path d="M613,326.5 L670,326.5" fill="none" stroke="#0000ff" stroke-width="1"/>
<path d="M613,341.5 L670,341.5" fill="none" stroke="#0000ff" stroke-width="1"/>
<path d="M613,372.5 L670,372.5" fill="none" stroke="#0000ff" stroke-width="1"/>
<path d="M56.5,381.5 L56.5,372.5 L95.5,372.5 L95.5,387.75" fill="none" stroke="#0000ff" stroke-width="1"/>
<path d="M56.5,415.5 L56.5,434.5" fill="none" stroke="#0000ff" stroke-width="1"/>
<path d="M95.5,427.5 L95.5,434.5" fill="none" stroke="#0000ff" stroke-width="1"/>
<path d="M134.5,427.5 L134.5,434.5" fill="none" stroke="#0000ff" stroke-width="1"/>
<path d="M48.5,240.5 L48.5,254.5" fill="none" stroke="#000090" stroke-width="1"/>
<path d="M48.5,258.5 L48.5,272.5" fill="none" stroke="#000090" stroke-width="1"/>
<path d="M48.5,302.5 L48.5,316.5" fill="none" stroke="#000090" stroke-width="1"/>
<path d="M48.5,320.5 L48.5,334.5" fill="none" stroke="#000090" stroke-width="1"/>
<path d="M67,279.5 L75,279.5" fill="none" stroke="#000090" stroke-width="1"/>
<path d="M107.5,279.5 L108,279.5" fill="none" stroke="#000090" stroke-width="1"/>
<path d="M134.5,220.5 L134.5,228.5" fill="none" stroke="#000090" stroke-width="1"/>
<path d="M134.5,260.5 L134.5,268.5" fill="none" stroke="#000090" stroke-width="1"/>
<path d="M172.5,189 L172.5,197" fill="none" stroke="#000090" stroke-width="1"/>
<path d="M172.5,229 L172.5,237" fill="none" stroke="#000090" stroke-width="1"/>
<path d="M219.5,322 L219.5,330" fill="none" stroke="#000090" stroke-width="1"/>
<path d="M219.5,360.5 L219.5,368" fill="none" stroke="#000090" stroke-width="1"/>
<path d="M281.5,341.5 L281.5,355.5" fill="none" stroke="#000090" stroke-width="1"/>
<path d="M281.5,359.5 L281.5,372.5" fill="none" stroke="#000090" stroke-width="1"/>
<path d="M298.5,279.5 L300.5,279.5" fill="none" stroke="#000090" stroke-width="1"/>
<path d="M332.5,279.5 L333,279.5" fill="none" stroke="#000090" stroke-width="1"/>
<path d="M305.5,318.5 L319.5,318.5" fill="none" stroke="#000090" stroke-width="1"/>
<path d="M322.5,318.5 L335,318.5" fill="none" stroke="#000090" stroke-width="1"/>
<path d="M351.5,375.5 L351.5,383.5" fill="none" stroke="#000090" stroke-width="1"/>
<path d="M351.5,414.5 L351.5,422" fill="none" stroke="#000090" stroke-width="1"/>
<path d="M646.5,386 L646.5,401.5" fill="none" stroke="#000090" stroke-width="1"/>
<path d="M646.5,405.5 L646.5,421.5" fill="none" stroke="#000090" stroke-width="1"/>
<path d="M367,279.5 L382.5,279.5" fill="none" stroke="#000090" stroke-width="1"/>
<path d="M404.5,279.5 L413,279.5" fill="none" stroke="#000090" stroke-width="1"/>
<path d="M428,279.5 L444.5,279.5" fill="none" stroke="#000090" stroke-width="1"/>
<path d="M466.5,279.5 L483.5,279.5" fill="none" stroke="#000090" stroke-width="1"/>
<path d="M507,279.5 L515,279.5" fill="none" stroke="#000090" stroke-width="1"/>
<path d="M630.5,171.5 L630.5,180.5" fill="none" stroke="#000090" stroke-width="1"/>
<path d="M630.5,200.5 L630.5,209.5" fill="none" stroke="#000090" stroke-width="1"/>
<path d="M134.5,228.5 L126.5,233.0 L142.5,240.5 L126.5,248.5 L142.5,256.5 L134.5,260.5" fill="none" stroke="#000090" stroke-width="1"/>
<path d="M172.5,197 L164.5,201.5 L180.5,209 L164.5,217 L180.5,225 L172.5,229" fill="none" stroke="#000090" stroke-width="1"/>
<path d="M219.5,329.5 L211.5,334.0 L227.5,341.5 L211.5,349.5 L227.5,357.5 L219.5,361.5" fill="none" stroke="#000090" stroke-width="1"/>
<path d="M351.5,383.5 L359.5,388.0 L343.5,395.5 L359.5,403.5 L343.5,411.5 L351.5,415.5" fill="none" stroke="#000090" stroke-width="1"/>
<path d="M56.5,381.5 L64.5,386.0 L48.5,393.5 L64.5,401.5 L48.5,409.5 L56.5,413.5" fill="none" stroke="#000090" stroke-width="1"/>
<path d="M75,279.5 L79.5,287.5 L87,271.5 L95,287.5 L103,271.5 L107,279.5" fill="none" stroke="#000090" stroke-width="1"/>
<path d="M300.5,279.5 L305.0,271.5 L312.5,287.5 L320.5,271.5 L328.5,287.5 L332.5,279.5" fill="none" stroke="#000090" stroke-width="1"/>
<path d="M196,373 L242.5,334.5" fill="none" stroke="#0000ff" stroke-width="1"/>
<rect x="240" y="332" width="5" height="5" fill="#0000ff"/>
<path d="M235.5,334.5 L242.5,334.5 L242.5,341.5" fill="none" stroke="#0000ff" stroke-width="1"/>
<path d="M40.5,254.5 H56.5 M40.5,258.5 H56.5" stroke="#000090" fill="none"/>
<path d="M40.5,316.5 H56.5 M40.5,320.5 H56.5" stroke="#000090" fill="none"/>
<path d="M272.5,355.5 H290.5 M272.5,359.5 H290.5" stroke="#000090" fill="none"/>
<path d="M638.5,401.5 H654.5 M638.5,405.5 H654.5" stroke="#000090" fill="none"/>
<path d="M319.5,310.5 V326.5 M322.5,310.5 V326.5" stroke="#000090" fill="none"/>
<path d="M134.5,387.75 C138.5,387.75 141.0,389.75 141.0,393.75 L141.0,398.75 C141.0,400.25 140.0,401.25 139.5,401.75 M139.5,401.75 C141.0,403.25 141.5,404.75 141.5,407.75 C141.5,410.75 141.0,412.25 139.5,413.75 M139.5,413.75 C141.0,415.25 141.0,416.25 141.0,417.75 L141.0,421.75 C141.0,425.25 138.0,427.5 134.5,427.5 M139.5,401.75 C136.5,398.95 131.5,398.95 128.5,401.75 C131.5,404.55 136.5,404.55 139.5,401.75 M139.5,413.75 C136.5,410.95 131.5,410.95 128.5,413.75 C131.5,416.55 136.5,416.55 139.5,413.75 " fill="none" stroke="#000090"/>
<path d="M95.5,387.75 C99.5,387.75 102.0,389.75 102.0,393.75 L102.0,398.75 C102.0,400.25 101.0,401.25 100.5,401.75 M100.5,401.75 C102.0,403.25 102.5,404.75 102.5,407.75 C102.5,410.75 102.0,412.25 100.5,413.75 M100.5,413.75 C102.0,415.25 102.0,416.25 102.0,417.75 L102.0,421.75 C102.0,425.25 99.0,427.5 95.5,427.5 M100.5,401.75 C97.5,398.95 92.5,398.95 89.5,401.75 C92.5,404.55 97.5,404.55 100.5,401.75 M100.5,413.75 C97.5,410.95 92.5,410.95 89.5,413.75 C92.5,416.55 97.5,416.55 100.5,413.75 " fill="none" stroke="#000090"/>
<circle cx="130" cy="394" r="1.8" fill="none" stroke="#000090"/>
<circle cx="91" cy="420.5" r="1.8" fill="none" stroke="#000090"/>
<path d="M210.5,388.5 H228.5 L219.5,397.5 Z" fill="none" stroke="#0000ff"/>
<path d="M272.5,388.5 H290.5 L281.5,397.5 Z" fill="none" stroke="#0000ff"/>
<path d="M381.5,303.5 H399.5 L390.5,312.5 Z" fill="none" stroke="#0000ff"/>
<path d="M443.5,303.5 H461.5 L452.5,312.5 Z" fill="none" stroke="#0000ff"/>
<path d="M621.5,209.5 H639.5 L630.5,218.5 Z" fill="none" stroke="#0000ff"/>
<path d="M47.5,434.5 H65.5 L56.5,443.5 Z" fill="none" stroke="#0000ff"/>
<path d="M86.5,434.5 H104.5 L95.5,443.5 Z" fill="none" stroke="#0000ff"/>
<path d="M125.5,434.5 H143.5 L134.5,443.5 Z" fill="none" stroke="#0000ff"/>
<rect x="132.0" y="169.0" width="5" height="5" fill="#0000ff"/>
<rect x="170.0" y="169.0" width="5" height="5" fill="#0000ff"/>
<rect x="388.0" y="169.0" width="5" height="5" fill="#0000ff"/>
<rect x="450.0" y="169.0" width="5" height="5" fill="#0000ff"/>
<rect x="46.0" y="277.0" width="5" height="5" fill="#0000ff"/>
<rect x="132.0" y="277.0" width="5" height="5" fill="#0000ff"/>
<rect x="132.0" y="339.0" width="5" height="5" fill="#0000ff"/>
<rect x="170.0" y="316.0" width="5" height="5" fill="#0000ff"/>
<rect x="217.0" y="316.0" width="5" height="5" fill="#0000ff"/>
<rect x="279.0" y="316.0" width="5" height="5" fill="#0000ff"/>
<rect x="349.0" y="316.0" width="5" height="5" fill="#0000ff"/>
<rect x="349.0" y="277.0" width="5" height="5" fill="#0000ff"/>
<rect x="419.0" y="277.0" width="5" height="5" fill="#0000ff"/>
<rect x="644.0" y="370.0" width="5" height="5" fill="#0000ff"/>
<path d="M134.5,295.5 L157,310.5" fill="none" stroke="#000090" stroke-width="1"/>
<path d="M157,310.5 L143.5,305 L147.5,301 Z" fill="none" stroke="#000090"/>
<path d="M157.5,303 L157.5,335" fill="none" stroke="#000090" stroke-width="1"/>
<path d="M157.5,318.5 L164.5,318.5" fill="none" stroke="#000090" stroke-width="1"/>
<path d="M157.5,327 L136.5,339.5 L134.5,341.5" fill="none" stroke="#000090" stroke-width="1"/>
<path d="M382.5,272.5 V287.5 L397.5,279.5 Z" fill="none" stroke="#000090"/>
<circle cx="401.0" cy="279.5" r="3.5" fill="none" stroke="#000090"/>
<path d="M444.5,272.5 V287.5 L459.5,279.5 Z" fill="none" stroke="#000090"/>
<circle cx="463.0" cy="279.5" r="3.5" fill="none" stroke="#000090"/>
<rect x="522.5" y="233.5" width="77" height="177" fill="none" stroke="#000090"/>
<path d="M522.5,299.5 L599.5,299.5" fill="none" stroke="#000090" stroke-width="1"/>
<path d="M506.5,240.5 V257.5 L497,249 Z" fill="none" stroke="#0000ff"/>
<path d="M506.5,248.5 L568.5,248.5 L568.5,299.5" fill="none" stroke="#000090" stroke-width="1"/>
<path d="M510.5,248.5 L510.5,264.5 L515,264.5" fill="none" stroke="#000090" stroke-width="1"/>
<circle cx="518" cy="264.5" r="3" fill="none" stroke="#000090"/>
<circle cx="518" cy="279.5" r="3" fill="none" stroke="#000090"/>
<path d="M522.5,256 A15.5,16 0 0 1 522.5,288" fill="none" stroke="#000090"/>
<path d="M538,272.5 L553.5,272.5 L553.5,299.5" fill="none" stroke="#000090" stroke-width="1"/>
<path d="M551,300 L553.5,305 L556,300" fill="none" stroke="#000090" stroke-width="1"/>
<path d="M599.5,310.5 L613,310.5" fill="none" stroke="#000090" stroke-width="1"/>
<rect x="613.5" y="309.0" width="3" height="3" fill="none" stroke="#0000ff"/>
<text x="594.6" y="314.0" text-anchor="end" font-size="10.2" font-weight="bold" fill="#000">Q1</text>
<path d="M599.5,326.5 L613,326.5" fill="none" stroke="#000090" stroke-width="1"/>
<text x="594.6" y="330.0" text-anchor="end" font-size="10.2" font-weight="bold" fill="#000">Q2</text>
<path d="M599.5,341.5 L613,341.5" fill="none" stroke="#000090" stroke-width="1"/>
<text x="594.6" y="345.0" text-anchor="end" font-size="10.2" font-weight="bold" fill="#000">Q3</text>
<path d="M599.5,357.5 L613,357.5" fill="none" stroke="#000090" stroke-width="1"/>
<rect x="613.5" y="356.0" width="3" height="3" fill="none" stroke="#0000ff"/>
<text x="594.6" y="361.0" text-anchor="end" font-size="10.2" font-weight="bold" fill="#000">Q4</text>
<path d="M599.5,372.5 L613,372.5" fill="none" stroke="#000090" stroke-width="1"/>
<text x="594.6" y="376.0" text-anchor="end" font-size="10.2" font-weight="bold" fill="#000">Q5</text>
<path d="M599.5,388.5 L613,388.5" fill="none" stroke="#000090" stroke-width="1"/>
<rect x="613.5" y="387.0" width="3" height="3" fill="none" stroke="#0000ff"/>
<text x="594.6" y="392.0" text-anchor="end" font-size="10.2" font-weight="bold" fill="#000">Q6</text>
<path d="M599.5,403.5 L613,403.5" fill="none" stroke="#000090" stroke-width="1"/>
<rect x="613.5" y="402.0" width="3" height="3" fill="none" stroke="#0000ff"/>
<text x="594.6" y="407.0" text-anchor="end" font-size="10.2" font-weight="bold" fill="#000">Q7</text>
<path d="M615,180.5 L647,180.5" fill="none" stroke="#000090" stroke-width="1"/>
<path d="M615,192.5 L647,192.5" fill="none" stroke="#000090" stroke-width="1"/>
<rect x="622.5" y="184.5" width="16" height="4" fill="none" stroke="#000090"/>
<rect x="622.5" y="196.5" width="16" height="4" fill="none" stroke="#000090"/>
<path d="M620.5,175.5 L625,175.5" fill="none" stroke="#000090" stroke-width="1"/>
<path d="M622.5,173 L622.5,178" fill="none" stroke="#000090" stroke-width="1"/>
<text x="43" y="248.0" text-anchor="end" font-size="10.2" font-weight="bold" fill="#000">C1</text>
<text x="44" y="272.3" text-anchor="end" font-size="10.2" font-weight="bold" fill="#000">150n</text>
<text x="43" y="310.3" text-anchor="end" font-size="10.2" font-weight="bold" fill="#000">C2</text>
<text x="44" y="334.7" text-anchor="end" font-size="10.2" font-weight="bold" fill="#000">150n</text>
<text x="90.4" y="269.8" text-anchor="middle" font-size="10.2" font-weight="bold" fill="#000">R6</text>
<text x="90.9" y="297.0" text-anchor="middle" font-size="10.2" font-weight="bold" fill="#000">220</text>
<text x="105.2" y="311.9" text-anchor="middle" font-size="10.2" font-weight="bold" fill="#000">2N3906</text>
<text x="123.1" y="330.0" text-anchor="end" font-size="10.2" font-weight="bold" fill="#000">Q1</text>
<text x="123" y="241.1" text-anchor="end" font-size="10.2" font-weight="bold" fill="#000">R1</text>
<text x="123.7" y="257.9" text-anchor="end" font-size="10.2" font-weight="bold" fill="#000">2k2</text>
<text x="162.5" y="210.0" text-anchor="end" font-size="10.2" font-weight="bold" fill="#000">R3</text>
<text x="162.5" y="227.2" text-anchor="end" font-size="10.2" font-weight="bold" fill="#000">47k</text>
<text x="315.3" y="270.1" text-anchor="middle" font-size="10.2" font-weight="bold" fill="#000">R4</text>
<text x="315.9" y="297.2" text-anchor="middle" font-size="10.2" font-weight="bold" fill="#000">1Meg</text>
<text x="319.4" y="308.4" text-anchor="middle" font-size="10.2" font-weight="bold" fill="#000">C3</text>
<text x="320.2" y="335.9" text-anchor="middle" font-size="10.2" font-weight="bold" fill="#000">10n</text>
<text x="208.6" y="341.4" text-anchor="end" font-size="10.2" font-weight="bold" fill="#000">R2</text>
<text x="208.6" y="359.2" text-anchor="end" font-size="10.2" font-weight="bold" fill="#000">19k2</text>
<text x="277.2" y="349.1" text-anchor="end" font-size="10.2" font-weight="bold" fill="#000">C5</text>
<text x="276.4" y="372.1" text-anchor="end" font-size="10.2" font-weight="bold" fill="#000">3n3</text>
<text x="219.5" y="194.4" font-size="10.2" font-weight="bold" fill="#000">.inc CD4000.lib</text>
<text x="207.6" y="213.5" font-size="10.2" font-weight="bold" fill="#000">.tran 0 .1 0 1u startup</text>
<text x="192.7" y="233.1" font-size="10.2" font-weight="bold" fill="#000">.step param click list 0.001 0.1</text>
<text x="192.4" y="245.5" font-size="10.2" font-weight="bold" fill="#000">K2 L2 L1 {click}</text>
<text x="396.2" y="269.3" font-size="10.2" font-weight="bold" fill="#000">U2</text>
<text x="395.8" y="296.3" font-size="10.2" font-weight="bold" fill="#000">CD4069UB</text>
<text x="458.4" y="269.3" font-size="10.2" font-weight="bold" fill="#000">U3</text>
<text x="458.4" y="296.3" font-size="10.2" font-weight="bold" fill="#000">CD4069UB</text>
<text x="553.1" y="228.7" font-size="10.2" font-weight="bold" fill="#000">U1</text>
<text x="527.7" y="245.8" font-size="10.2" font-weight="bold" fill="#000">R</text>
<text x="539.1" y="267.9" font-size="10.2" font-weight="bold" fill="#000">CP</text>
<text x="537.9" y="422.5" font-size="10.2" font-weight="bold" fill="#000">CD4024B</text>
<text x="669.5" y="330.1" font-size="10.2" font-weight="bold" fill="#000">pin11</text>
<text x="669.5" y="345.1" font-size="10.2" font-weight="bold" fill="#000">pin9</text>
<text x="669.5" y="376.1" font-size="10.2" font-weight="bold" fill="#000">pin5</text>
<text x="649.9" y="396.2" font-size="10.2" font-weight="bold" fill="#000">C4</text>
<text x="650.6" y="419.2" font-size="10.2" font-weight="bold" fill="#000">1n8</text>
<text x="642.3" y="175.2" font-size="10.2" font-weight="bold" fill="#000">V1</text>
<text x="642.3" y="217.1" font-size="10.2" font-weight="bold" fill="#000">5V</text>
<text x="143.8" y="400.2" font-size="10.2" font-weight="bold" fill="#000">L1</text>
<text x="143.8" y="419.0" font-size="10.2" font-weight="bold" fill="#000">1.6mH</text>
<text x="105.8" y="403.2" font-size="10.2" font-weight="bold" fill="#000">L2</text>
<text x="105.8" y="423.6" font-size="10.2" font-weight="bold" fill="#000">30µ</text>
<text x="66.2" y="396.3" font-size="10.2" font-weight="bold" fill="#000">R7</text>
<text x="66.6" y="413.3" font-size="10.2" font-weight="bold" fill="#000">1</text>
<text x="361.4" y="396.0" font-size="10.2" font-weight="bold" fill="#000">R5</text>
<text x="361.7" y="413.5" font-size="10.2" font-weight="bold" fill="#000">1Meg</text>
<text x="0" y="0" font-size="12" font-weight="bold" fill="#000" transform="translate(354.5,256.5) rotate(-90)">relax</text>
<text x="0" y="0" text-anchor="middle" font-size="12" font-weight="bold" fill="#000" transform="translate(540,356.5) rotate(-90)">7 stage ripple ctr</text>
<line x1="775" y1="73.5" x2="1419" y2="73.5" stroke="#707070" stroke-dasharray="3 3"/>
<line x1="775" y1="92.5" x2="1419" y2="92.5" stroke="#707070" stroke-dasharray="3 3"/>
<line x1="775" y1="112.5" x2="1419" y2="112.5" stroke="#707070" stroke-dasharray="3 3"/>
<line x1="775" y1="131.5" x2="1419" y2="131.5" stroke="#707070" stroke-dasharray="3 3"/>
<line x1="775" y1="151.5" x2="1419" y2="151.5" stroke="#707070" stroke-dasharray="3 3"/>
<line x1="775" y1="170.5" x2="1419" y2="170.5" stroke="#707070" stroke-dasharray="3 3"/>
<line x1="775" y1="190.5" x2="1419" y2="190.5" stroke="#707070" stroke-dasharray="3 3"/>
<line x1="775" y1="209.5" x2="1419" y2="209.5" stroke="#707070" stroke-dasharray="3 3"/>
<line x1="775" y1="229.5" x2="1419" y2="229.5" stroke="#707070" stroke-dasharray="3 3"/>
<line x1="775" y1="248.5" x2="1419" y2="248.5" stroke="#707070" stroke-dasharray="3 3"/>
<line x1="775" y1="268.5" x2="1419" y2="268.5" stroke="#707070" stroke-dasharray="3 3"/>
<line x1="839.5" y1="57" x2="839.5" y2="287" stroke="#707070" stroke-dasharray="3 3"/>
<line x1="904.5" y1="57" x2="904.5" y2="287" stroke="#707070" stroke-dasharray="3 3"/>
<line x1="968.5" y1="57" x2="968.5" y2="287" stroke="#707070" stroke-dasharray="3 3"/>
<line x1="1032.5" y1="57" x2="1032.5" y2="287" stroke="#707070" stroke-dasharray="3 3"/>
<line x1="1097.5" y1="57" x2="1097.5" y2="287" stroke="#707070" stroke-dasharray="3 3"/>
<line x1="1161.5" y1="57" x2="1161.5" y2="287" stroke="#707070" stroke-dasharray="3 3"/>
<line x1="1225.5" y1="57" x2="1225.5" y2="287" stroke="#707070" stroke-dasharray="3 3"/>
<line x1="1289.5" y1="57" x2="1289.5" y2="287" stroke="#707070" stroke-dasharray="3 3"/>
<line x1="1354.5" y1="57" x2="1354.5" y2="287" stroke="#707070" stroke-dasharray="3 3"/>
<rect x="775.5" y="53.5" width="643" height="234" fill="none" stroke="#a8a8a8"/>
<line x1="768" y1="53.5" x2="775" y2="53.5" stroke="#a8a8a8"/>
<text x="766.5" y="58" font-size="13" fill="#c0c0c0" text-anchor="end">5.5V</text>
<line x1="768" y1="73.5" x2="775" y2="73.5" stroke="#a8a8a8"/>
<text x="766.5" y="78" font-size="13" fill="#c0c0c0" text-anchor="end">5.0V</text>
<line x1="768" y1="92.5" x2="775" y2="92.5" stroke="#a8a8a8"/>
<text x="766.5" y="97" font-size="13" fill="#c0c0c0" text-anchor="end">4.5V</text>
<line x1="768" y1="112.5" x2="775" y2="112.5" stroke="#a8a8a8"/>
<text x="766.5" y="117" font-size="13" fill="#c0c0c0" text-anchor="end">4.0V</text>
<line x1="768" y1="131.5" x2="775" y2="131.5" stroke="#a8a8a8"/>
<text x="766.5" y="136" font-size="13" fill="#c0c0c0" text-anchor="end">3.5V</text>
<line x1="768" y1="151.5" x2="775" y2="151.5" stroke="#a8a8a8"/>
<text x="766.5" y="156" font-size="13" fill="#c0c0c0" text-anchor="end">3.0V</text>
<line x1="768" y1="170.5" x2="775" y2="170.5" stroke="#a8a8a8"/>
<text x="766.5" y="175" font-size="13" fill="#c0c0c0" text-anchor="end">2.5V</text>
<line x1="768" y1="190.5" x2="775" y2="190.5" stroke="#a8a8a8"/>
<text x="766.5" y="195" font-size="13" fill="#c0c0c0" text-anchor="end">2.0V</text>
<line x1="768" y1="209.5" x2="775" y2="209.5" stroke="#a8a8a8"/>
<text x="766.5" y="214" font-size="13" fill="#c0c0c0" text-anchor="end">1.5V</text>
<line x1="768" y1="229.5" x2="775" y2="229.5" stroke="#a8a8a8"/>
<text x="766.5" y="234" font-size="13" fill="#c0c0c0" text-anchor="end">1.0V</text>
<line x1="768" y1="248.5" x2="775" y2="248.5" stroke="#a8a8a8"/>
<text x="766.5" y="253" font-size="13" fill="#c0c0c0" text-anchor="end">0.5V</text>
<line x1="768" y1="268.5" x2="775" y2="268.5" stroke="#a8a8a8"/>
<text x="766.5" y="273" font-size="13" fill="#c0c0c0" text-anchor="end">0.0V</text>
<line x1="768" y1="287.5" x2="775" y2="287.5" stroke="#a8a8a8"/>
<text x="766.5" y="292" font-size="13" fill="#c0c0c0" text-anchor="end">-0.5V</text>
<line x1="775" y1="328.5" x2="1419" y2="328.5" stroke="#707070" stroke-dasharray="3 3"/>
<line x1="775" y1="348.5" x2="1419" y2="348.5" stroke="#707070" stroke-dasharray="3 3"/>
<line x1="775" y1="368.5" x2="1419" y2="368.5" stroke="#707070" stroke-dasharray="3 3"/>
<line x1="775" y1="387.5" x2="1419" y2="387.5" stroke="#707070" stroke-dasharray="3 3"/>
<line x1="775" y1="407.5" x2="1419" y2="407.5" stroke="#707070" stroke-dasharray="3 3"/>
<line x1="775" y1="427.5" x2="1419" y2="427.5" stroke="#707070" stroke-dasharray="3 3"/>
<line x1="775" y1="447.5" x2="1419" y2="447.5" stroke="#707070" stroke-dasharray="3 3"/>
<line x1="775" y1="467.5" x2="1419" y2="467.5" stroke="#707070" stroke-dasharray="3 3"/>
<line x1="775" y1="487.5" x2="1419" y2="487.5" stroke="#707070" stroke-dasharray="3 3"/>
<line x1="775" y1="506.5" x2="1419" y2="506.5" stroke="#707070" stroke-dasharray="3 3"/>
<line x1="775" y1="526.5" x2="1419" y2="526.5" stroke="#707070" stroke-dasharray="3 3"/>
<line x1="839.5" y1="310" x2="839.5" y2="546" stroke="#707070" stroke-dasharray="3 3"/>
<line x1="904.5" y1="310" x2="904.5" y2="546" stroke="#707070" stroke-dasharray="3 3"/>
<line x1="968.5" y1="310" x2="968.5" y2="546" stroke="#707070" stroke-dasharray="3 3"/>
<line x1="1032.5" y1="310" x2="1032.5" y2="546" stroke="#707070" stroke-dasharray="3 3"/>
<line x1="1097.5" y1="310" x2="1097.5" y2="546" stroke="#707070" stroke-dasharray="3 3"/>
<line x1="1161.5" y1="310" x2="1161.5" y2="546" stroke="#707070" stroke-dasharray="3 3"/>
<line x1="1225.5" y1="310" x2="1225.5" y2="546" stroke="#707070" stroke-dasharray="3 3"/>
<line x1="1289.5" y1="310" x2="1289.5" y2="546" stroke="#707070" stroke-dasharray="3 3"/>
<line x1="1354.5" y1="310" x2="1354.5" y2="546" stroke="#707070" stroke-dasharray="3 3"/>
<rect x="775.5" y="308.5" width="643" height="238" fill="none" stroke="#a8a8a8"/>
<line x1="768" y1="308.5" x2="775" y2="308.5" stroke="#a8a8a8"/>
<text x="766.5" y="313" font-size="13" fill="#c0c0c0" text-anchor="end">5.5V</text>
<line x1="768" y1="328.5" x2="775" y2="328.5" stroke="#a8a8a8"/>
<text x="766.5" y="333" font-size="13" fill="#c0c0c0" text-anchor="end">5.0V</text>
<line x1="768" y1="348.5" x2="775" y2="348.5" stroke="#a8a8a8"/>
<text x="766.5" y="353" font-size="13" fill="#c0c0c0" text-anchor="end">4.5V</text>
<line x1="768" y1="368.5" x2="775" y2="368.5" stroke="#a8a8a8"/>
<text x="766.5" y="373" font-size="13" fill="#c0c0c0" text-anchor="end">4.0V</text>
<line x1="768" y1="387.5" x2="775" y2="387.5" stroke="#a8a8a8"/>
<text x="766.5" y="392" font-size="13" fill="#c0c0c0" text-anchor="end">3.5V</text>
<line x1="768" y1="407.5" x2="775" y2="407.5" stroke="#a8a8a8"/>
<text x="766.5" y="412" font-size="13" fill="#c0c0c0" text-anchor="end">3.0V</text>
<line x1="768" y1="427.5" x2="775" y2="427.5" stroke="#a8a8a8"/>
<text x="766.5" y="432" font-size="13" fill="#c0c0c0" text-anchor="end">2.5V</text>
<line x1="768" y1="447.5" x2="775" y2="447.5" stroke="#a8a8a8"/>
<text x="766.5" y="452" font-size="13" fill="#c0c0c0" text-anchor="end">2.0V</text>
<line x1="768" y1="467.5" x2="775" y2="467.5" stroke="#a8a8a8"/>
<text x="766.5" y="472" font-size="13" fill="#c0c0c0" text-anchor="end">1.5V</text>
<line x1="768" y1="487.5" x2="775" y2="487.5" stroke="#a8a8a8"/>
<text x="766.5" y="492" font-size="13" fill="#c0c0c0" text-anchor="end">1.0V</text>
<line x1="768" y1="506.5" x2="775" y2="506.5" stroke="#a8a8a8"/>
<text x="766.5" y="511" font-size="13" fill="#c0c0c0" text-anchor="end">0.5V</text>
<line x1="768" y1="526.5" x2="775" y2="526.5" stroke="#a8a8a8"/>
<text x="766.5" y="531" font-size="13" fill="#c0c0c0" text-anchor="end">0.0V</text>
<line x1="768" y1="546.5" x2="775" y2="546.5" stroke="#a8a8a8"/>
<text x="766.5" y="551" font-size="13" fill="#c0c0c0" text-anchor="end">-0.5V</text>
<line x1="775.5" y1="546" x2="775.5" y2="553" stroke="#a8a8a8"/>
<text x="775.5" y="567" font-size="14" fill="#c0c0c0" text-anchor="middle">0ms</text>
<line x1="839.5" y1="546" x2="839.5" y2="553" stroke="#a8a8a8"/>
<text x="839.5" y="567" font-size="14" fill="#c0c0c0" text-anchor="middle">10ms</text>
<line x1="904.5" y1="546" x2="904.5" y2="553" stroke="#a8a8a8"/>
<text x="904.5" y="567" font-size="14" fill="#c0c0c0" text-anchor="middle">20ms</text>
<line x1="968.5" y1="546" x2="968.5" y2="553" stroke="#a8a8a8"/>
<text x="968.5" y="567" font-size="14" fill="#c0c0c0" text-anchor="middle">30ms</text>
<line x1="1032.5" y1="546" x2="1032.5" y2="553" stroke="#a8a8a8"/>
<text x="1032.5" y="567" font-size="14" fill="#c0c0c0" text-anchor="middle">40ms</text>
<line x1="1097.5" y1="546" x2="1097.5" y2="553" stroke="#a8a8a8"/>
<text x="1097.5" y="567" font-size="14" fill="#c0c0c0" text-anchor="middle">50ms</text>
<line x1="1161.5" y1="546" x2="1161.5" y2="553" stroke="#a8a8a8"/>
<text x="1161.5" y="567" font-size="14" fill="#c0c0c0" text-anchor="middle">60ms</text>
<line x1="1225.5" y1="546" x2="1225.5" y2="553" stroke="#a8a8a8"/>
<text x="1225.5" y="567" font-size="14" fill="#c0c0c0" text-anchor="middle">70ms</text>
<line x1="1289.5" y1="546" x2="1289.5" y2="553" stroke="#a8a8a8"/>
<text x="1289.5" y="567" font-size="14" fill="#c0c0c0" text-anchor="middle">80ms</text>
<line x1="1354.5" y1="546" x2="1354.5" y2="553" stroke="#a8a8a8"/>
<text x="1354.5" y="567" font-size="14" fill="#c0c0c0" text-anchor="middle">90ms</text>
<line x1="1418.5" y1="546" x2="1418.5" y2="553" stroke="#a8a8a8"/>
<text x="1418.5" y="567" font-size="14" fill="#c0c0c0" text-anchor="middle">100ms</text>
<polygon points="775.5,131.0 776.8,131.0 777.5,146.0 780.0,155.0 784.5,162.5 786.0,157.0 790.0,150.5 795.0,148.3 800.0,147.0 810.0,146.0 825.0,146.0 860.0,149.0 900.0,152.5 976.5,156.0 983.5,169.0 990.5,162.0 997.5,168.5 1004.5,161.3 1011.5,168.0 1018.6,160.6 1025.6,167.5 1032.6,159.9 1039.6,167.0 1046.6,159.3 1053.6,166.5 1060.6,158.6 1067.6,166.0 1074.6,157.9 1081.7,165.5 1084.7,162.7 1088.8,156.5 1094.3,152.1 1102.6,150.3 1125.0,150.4 1160.0,153.0 1200.0,154.5 1241.6,156.0 1248.6,169.4 1255.6,162.7 1262.6,168.8 1269.6,162.0 1276.6,168.2 1283.7,161.2 1290.7,167.6 1297.7,160.5 1304.7,167.0 1311.7,159.7 1318.7,166.4 1325.7,159.0 1332.7,165.8 1339.7,158.2 1346.8,165.2 1349.5,160.5 1353.0,156.0 1356.4,153.2 1365.0,150.2 1390.0,150.2 1418.5,152.5 1418.5,189.6 1390.0,187.0 1365.0,187.3 1356.0,189.6 1353.0,191.5 1349.5,195.0 1346.8,203.5 1339.7,194.3 1332.7,204.1 1325.7,194.9 1318.7,204.6 1311.7,195.4 1304.7,205.2 1297.7,195.9 1290.7,205.8 1283.7,196.4 1276.6,206.4 1269.6,197.0 1262.6,206.9 1255.6,197.5 1248.6,207.5 1241.6,192.8 1200.0,191.2 1160.0,189.7 1122.0,187.2 1102.6,187.5 1094.3,190.2 1088.8,193.7 1084.7,197.8 1081.7,202.6 1074.6,194.7 1067.6,203.3 1060.6,195.1 1053.6,204.0 1046.6,195.6 1039.6,204.7 1032.6,196.1 1025.6,205.4 1018.6,196.6 1011.5,206.1 1004.5,197.0 997.5,206.8 990.5,197.5 983.5,207.5 976.5,192.8 900.0,190.0 860.0,186.0 825.0,183.0 810.0,183.0 800.0,184.5 795.0,186.7 790.0,191.0 786.0,196.5 784.5,202.0 780.0,197.0 775.5,190.0" fill="#00b2b2"/>
<path d="M775.5,73 V267.5 H784.5 V73.5 H976.5 V267.5 H983.5 V73.5 H990.5 V267.5 H997.5 V73.5 H1004.5 V267.5 H1011.5 V73.5 H1018.5 V267.5 H1025.5 V73.5 H1032.5 V267.5 H1039.5 V73.5 H1046.5 V267.5 H1053.5 V73.5 H1060.5 V267.5 H1067.5 V73.5 H1074.5 V267.5 H1081.5 V73.5 H1241.5 V267.5 H1248.5 V73.5 H1255.5 V267.5 H1262.5 V73.5 H1269.5 V267.5 H1276.5 V73.5 H1283.5 V267.5 H1290.5 V73.5 H1297.5 V267.5 H1304.5 V73.5 H1311.5 V267.5 H1318.5 V73.5 H1325.5 V267.5 H1332.5 V73.5 H1339.5 V267.5 H1346.5 V73.5 H1418.5" fill="none" stroke="#ff00ff" stroke-width="1"/>
<rect x="804" y="72" width="172" height="1" fill="#ff00ff"/>
<rect x="1099" y="72" width="143" height="1" fill="#ff00ff"/>
<rect x="1364" y="72" width="55" height="1" fill="#ff00ff"/>
<polygon points="775.5,386.0 776.8,386.0 777.5,398.0 780.0,408.3 784.5,414.5 786.0,409.0 790.0,403.7 795.0,399.8 800.0,397.5 810.0,396.2 825.0,396.5 880.0,401.8 970.0,406.4 1020.0,407.3 1150.0,407.7 1418.5,407.7 1418.5,449.7 1150.0,449.5 1020.0,449.3 970.0,448.3 880.0,444.9 825.0,438.8 810.0,439.3 800.0,441.7 795.0,444.0 790.0,447.0 786.0,451.0 784.5,458.0 780.0,452.5 775.5,447.0" fill="#ff00ff"/>
<path d="M775.5,328 V526.5 H784.5 V328.5 H1418.5" fill="none" stroke="#00b2b2" stroke-width="1"/>
<text x="910" y="48" font-size="13" font-weight="bold" fill="#00b2b2">V(relax)</text>
<text x="1233.5" y="48" font-size="13" font-weight="bold" fill="#ff00ff">V(pin5)</text>
<text x="910" y="303" font-size="13" font-weight="bold" fill="#ff00ff">V(relax)</text>
<text x="1233.5" y="303" font-size="13" font-weight="bold" fill="#00b2b2">V(pin5)</text>
</svg></body></html>
